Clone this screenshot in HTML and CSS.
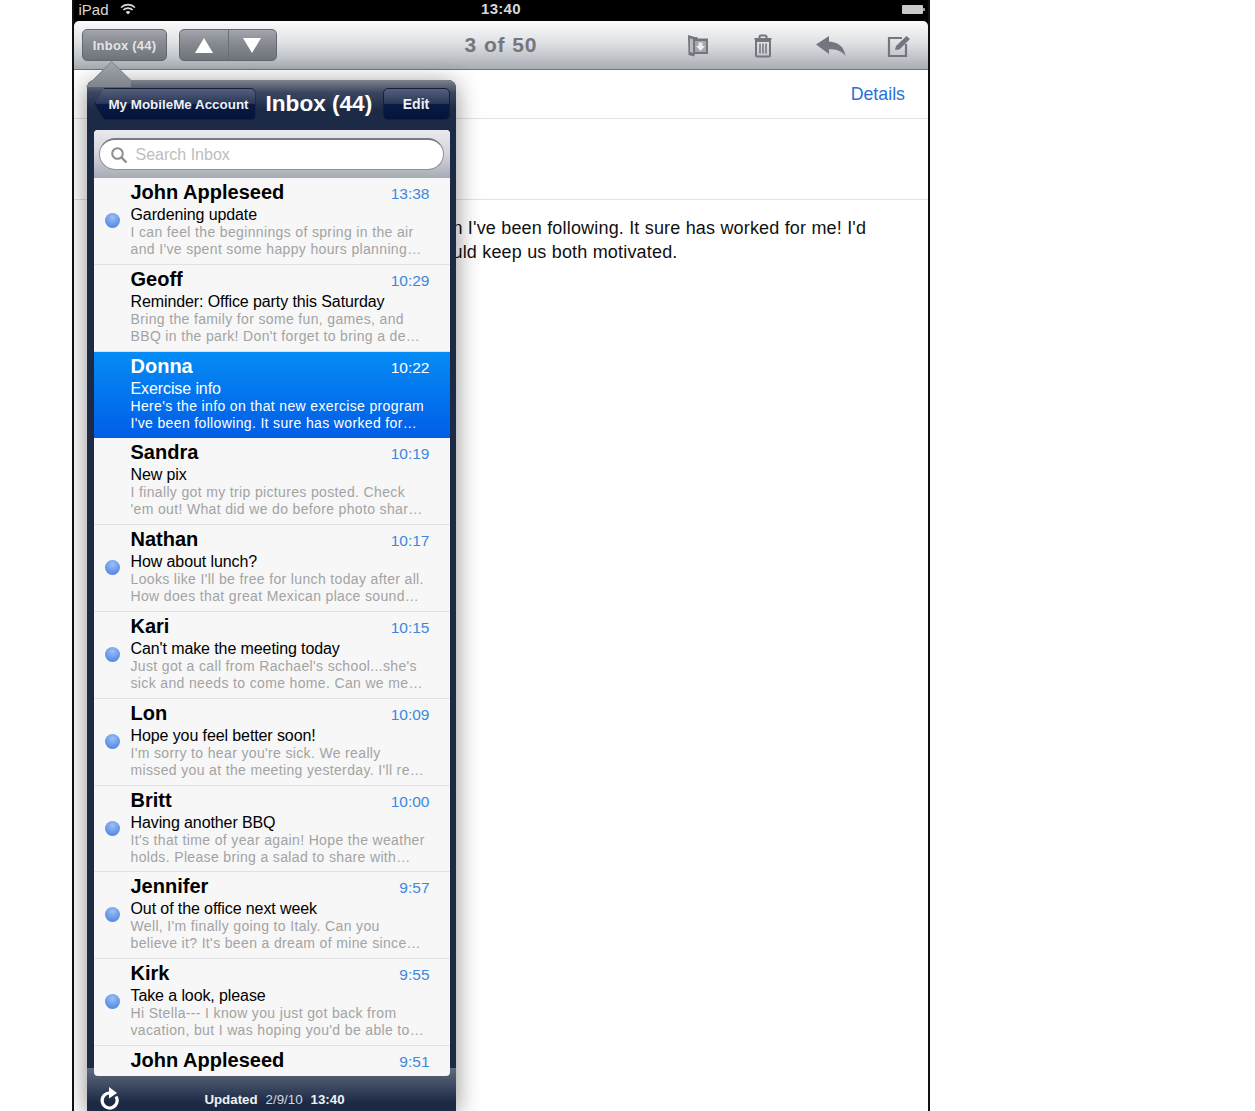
FILE: index.html
```html
<!DOCTYPE html>
<html lang="en">
  <head>
    <meta charset="UTF-8" />
    <title>Mail</title>
    <link rel="stylesheet" href="styles.css">
  </head>
  <body>
    <div class="ipad">
      <div class="status-bar">
        <div class="status-left">
          <span>iPad</span>
          <svg class="wifi" width="16" height="12" viewBox="0 0 16 12"><path d="M1 4.500a10 10 0 0 1 14 0M3.400 7a6.600 6.600 0 0 1 9.200 0" fill="none" stroke="#ddd" stroke-width="1.600"/><path d="M5.600 9.100a3.400 3.400 0 0 1 4.800 0L8 11.600z" fill="#ddd"/></svg>
        </div>
        <span class="clock">13:40</span>
        <div class="battery"></div>
      </div>

      <div class="toolbar">
        <div class="tool-left">
          <button class="tool-btn inbox-btn">Inbox (44)</button>
          <div class="tool-btn arrows">
            <span class="arrow-cell"><span class="tri-up"></span></span>
            <span class="arrow-cell"><span class="tri-down"></span></span>
          </div>
        </div>
        <div class="counter">3 of 50</div>
        <div class="tool-icons">
          <svg class="icon-folder" width="22" height="24" viewBox="0 0 22 24"><path d="M1 1l5 1.500c2 .6 3 .5 4 .5l1 1.500h10V20H8l-1 2.500L1.500 21z" fill="#73777d"/><path d="M3 4.300l3 .9V18.800l-3-.9z" fill="#b9bcc2"/><path d="M8 7h11v11H8z" fill="#a4a7ad"/><path d="M11.500 8.500h4v3.500H18l-4.500 5L9 12h2.500z" fill="#eceef0"/></svg>
          <svg class="icon-trash" width="20" height="24" viewBox="0 0 20 24"><path d="M6.500 4.500V3a1.500 1.500 0 0 1 1.500-1.500h4A1.500 1.500 0 0 1 13.500 3v1.500M1.500 5h17M3 7h14v14a1.500 1.500 0 0 1-1.500 1.500h-11A1.500 1.500 0 0 1 3 21z" fill="none" stroke="#73777d" stroke-width="2"/><path d="M7 9.500v10M10 9.500v10M13 9.500v10" stroke="#73777d" stroke-width="1.500"/></svg>
          <svg class="icon-reply" width="30" height="22" viewBox="0 0 30 22"><path d="M0 9.500L13 1v5.500c9 .5 15 5 16.500 14.500-3.500-5-9-6.800-16.500-6.800V19z" fill="#73777d"/></svg>
          <svg class="icon-compose" width="24" height="22" viewBox="0 0 24 22"><path d="M15 3H2v18h17V9" fill="none" stroke="#73777d" stroke-width="2.200"/><path d="M8 15l1-4L19.500 1 23 4 12.500 14.500z" fill="#73777d"/></svg>
        </div>
      </div>

      <div class="mail">
        <div class="mail-from"><a class="details">Details</a></div>
        <div class="mail-subject"></div>
        <div class="mail-body">
          <p>n I've been following. It sure has worked for me! I'd</p>
          <p>uld keep us both motivated.</p>
        </div>
      </div>

      <svg class="popover-arrow" width="46" height="26" viewBox="0 0 46 26">
        <defs>
          <linearGradient id="arrowFill" x1="0" y1="0" x2="0" y2="1">
            <stop offset="0" stop-color="#a3a6ad"/>
            <stop offset="1" stop-color="#7f838c"/>
          </linearGradient>
        </defs>
        <path d="M.5 25.500L25.500 .7 45 19.500V26H.5z" fill="url(#arrowFill)"/>
        <path d="M.5 25.500L25.500 .7 45 19.500" fill="none" stroke="#7b7f87"/>
      </svg>

      <div class="popover">
        <div class="pop-head">
          <button class="back-btn">My MobileMe Account</button>
          <h2 class="pop-title">Inbox (44)</h2>
          <button class="edit-btn">Edit</button>
        </div>

        <div class="pop-list">
          <div class="search-bar">
            <div class="search-field">
              <svg width="18" height="18" viewBox="0 0 18 18"><circle cx="7.500" cy="7.500" r="5.300" fill="none" stroke="#8d8d8d" stroke-width="2"/><path d="M11.500 11.500l5 5" stroke="#8d8d8d" stroke-width="2.400"/></svg>
              <span>Search Inbox</span>
            </div>
          </div>

          <div class="msg unread">
            <div class="msg-top"><b>John Appleseed</b><time>13:38</time></div>
            <div class="msg-subject">Gardening update</div>
            <div class="msg-preview">I can feel the beginnings of spring in the air<br>and I've spent some happy hours planning…</div>
          </div>
          <div class="msg">
            <div class="msg-top"><b>Geoff</b><time>10:29</time></div>
            <div class="msg-subject">Reminder: Office party this Saturday</div>
            <div class="msg-preview">Bring the family for some fun, games, and<br>BBQ in the park! Don't forget to bring a de…</div>
          </div>
          <div class="msg selected">
            <div class="msg-top"><b>Donna</b><time>10:22</time></div>
            <div class="msg-subject">Exercise info</div>
            <div class="msg-preview">Here's the info on that new exercise program<br>I've been following. It sure has worked for…</div>
          </div>
          <div class="msg">
            <div class="msg-top"><b>Sandra</b><time>10:19</time></div>
            <div class="msg-subject">New pix</div>
            <div class="msg-preview">I finally got my trip pictures posted. Check<br>'em out! What did we do before photo shar…</div>
          </div>
          <div class="msg unread">
            <div class="msg-top"><b>Nathan</b><time>10:17</time></div>
            <div class="msg-subject">How about lunch?</div>
            <div class="msg-preview">Looks like I'll be free for lunch today after all.<br>How does that great Mexican place sound…</div>
          </div>
          <div class="msg unread">
            <div class="msg-top"><b>Kari</b><time>10:15</time></div>
            <div class="msg-subject">Can't make the meeting today</div>
            <div class="msg-preview">Just got a call from Rachael's school...she's<br>sick and needs to come home. Can we me…</div>
          </div>
          <div class="msg unread">
            <div class="msg-top"><b>Lon</b><time>10:09</time></div>
            <div class="msg-subject">Hope you feel better soon!</div>
            <div class="msg-preview">I'm sorry to hear you're sick. We really<br>missed you at the meeting yesterday. I'll re…</div>
          </div>
          <div class="msg unread">
            <div class="msg-top"><b>Britt</b><time>10:00</time></div>
            <div class="msg-subject">Having another BBQ</div>
            <div class="msg-preview">It's that time of year again! Hope the weather<br>holds. Please bring a salad to share with…</div>
          </div>
          <div class="msg unread">
            <div class="msg-top"><b>Jennifer</b><time>9:57</time></div>
            <div class="msg-subject">Out of the office next week</div>
            <div class="msg-preview">Well, I'm finally going to Italy. Can you<br>believe it? It's been a dream of mine since…</div>
          </div>
          <div class="msg unread">
            <div class="msg-top"><b>Kirk</b><time>9:55</time></div>
            <div class="msg-subject">Take a look, please</div>
            <div class="msg-preview">Hi Stella--- I know you just got back from<br>vacation, but I was hoping you'd be able to…</div>
          </div>
          <div class="msg">
            <div class="msg-top"><b>John Appleseed</b><time>9:51</time></div>
          </div>
        </div>

        <div class="pop-foot">
          <svg class="refresh" width="22" height="24" viewBox="0 0 22 24"><path d="M17 9.500A7.500 7.500 0 1 1 10.500 6" fill="none" stroke="#fff" stroke-width="3.200"/><path d="M10 0l8 6-8 5.500z" fill="#fff"/></svg>
          <div class="updated"><b>Updated</b><span>2/9/10</span><b>13:40</b></div>
        </div>
      </div>
    </div>
  </body>
</html>
```

FILE: styles.css
```css
html,
body {
  margin: 0;
  height: 1111px;
  overflow: hidden;
  background: #fff;
}

body {
  font-family: 'Liberation Sans', Arial, sans-serif;
}

button {
  font-family: inherit;
  padding: 0;
  cursor: pointer;
}

.ipad {
  position: relative;
  width: 854px;
  height: 1111px;
  margin-left: 72px;
  border-left: 2.500px solid #111;
  border-right: 2px solid #111;
  overflow: hidden;
  background: #000;
}

.status-bar {
  height: 21px;
  display: flex;
  align-items: center;
  justify-content: space-between;
  padding: 0 3px 3px 4.500px;
  box-sizing: border-box;
  color: #d8d8d8;
  font-size: 15px;
  position: relative;
}

.status-left {
  display: flex;
  align-items: center;
  gap: 11px;
}

.clock {
  position: absolute;
  left: 407px;
  top: 0;
  font-weight: bold;
  letter-spacing: 0.300px;
}

.battery {
  position: relative;
  width: 21px;
  height: 9px;
  background: #c9c9c9;
  border-radius: 1px;
  margin-right: 2px;
}

.battery::after {
  content: '';
  position: absolute;
  right: -2px;
  top: 3px;
  width: 2px;
  height: 3px;
  background: #999;
}

.toolbar {
  height: 48px;
  display: grid;
  grid-template-columns: 1fr auto 1fr;
  align-items: center;
  padding: 0 17px 0 8px;
  border-radius: 5px 5px 0 0;
  border-bottom: 1px solid #72767c;
  background: linear-gradient(#fafafb, #dfe1e4 45%, #a9adb4);
}

.tool-left {
  display: flex;
  gap: 12px;
}

.tool-btn {
  height: 32px;
  box-sizing: border-box;
  border: 1px solid #62666d;
  border-radius: 5px;
  background: linear-gradient(#a2a5ab, #83878e 50%, #6f737b);
}

.inbox-btn {
  width: 85px;
  color: #e2e4e7;
  font-size: 13px;
  font-weight: bold;
  letter-spacing: 0.200px;
}

.arrows {
  width: 98px;
  display: flex;
}

.arrow-cell {
  flex: 1;
  display: flex;
  align-items: center;
  justify-content: center;
}

.arrow-cell + .arrow-cell {
  border-left: 1px solid #6b6f76;
}

.tri-up,
.tri-down {
  width: 0;
  height: 0;
  border-left: 9.500px solid transparent;
  border-right: 9.500px solid transparent;
}

.tri-up {
  border-bottom: 15px solid #fff;
}

.tri-down {
  border-top: 15px solid #fff;
}

.counter {
  color: #73777d;
  font-size: 21px;
  font-weight: bold;
  letter-spacing: 0.900px;
  margin-left: 9px;
}

.tool-icons {
  display: flex;
  align-items: center;
  justify-content: flex-end;
  gap: 43px;
  padding-top: 1px;
}

.icon-folder {
  margin-right: 1px;
}

.icon-reply {
  margin-right: -2px;
}

.mail {
  background: #fff;
  height: 1041px;
}

.mail-from {
  height: 48px;
  display: flex;
  align-items: center;
  justify-content: flex-end;
  padding-right: 23px;
  border-bottom: 1px solid #e2e2e2;
}

.details {
  color: #2a70d8;
  font-size: 17.800px;
}

.mail-subject {
  height: 80px;
  border-bottom: 1px solid #e2e2e2;
}

.mail-body {
  padding: 17px 0 0 378.500px;
  color: #111;
  font-size: 18px;
  line-height: 23.500px;
  letter-spacing: 0.180px;
}

.mail-body p {
  margin: 0;
  white-space: nowrap;
}

.popover-arrow {
  position: absolute;
  left: 12px;
  top: 61px;
  z-index: 2;
}

.popover {
  position: absolute;
  left: 12.500px;
  top: 80px;
  width: 369px;
  height: 1031px;
  border-radius: 8px 8px 0 0;
  background: #1c2a45;
  box-shadow: 0 4px 24px rgba(0, 0, 0, 0.45);
  z-index: 1;
}

.pop-head {
  height: 50px;
  display: flex;
  align-items: flex-start;
  gap: 10px;
  padding: 8px 6px 0 8px;
  box-sizing: border-box;
  border-radius: 8px 8px 0 0;
  background: linear-gradient(#7f838c, #3c4660 25%, #1c2a45 60%);
  position: relative;
  z-index: 3;
}

.back-btn,
.edit-btn {
  height: 32px;
  color: #eef0f4;
  font-weight: bold;
  border: 1px solid #14203a;
  border-radius: 5px;
  background: linear-gradient(#55607a, #2a3757 48%, #081a45 52%, #04133a);
}

.back-btn {
  width: 161px;
  flex: none;
  padding-left: 7px;
  font-size: 13.400px;
  clip-path: polygon(10px 0, 100% 0, 100% 100%, 10px 100%, 0 50%);
}

.edit-btn {
  width: 67px;
  flex: none;
  font-size: 14px;
}

.pop-title {
  flex: 1;
  margin: 3px 0 0;
  color: #fff;
  font-size: 22.600px;
  font-weight: bold;
  white-space: nowrap;
}

.pop-list {
  position: relative;
  z-index: 1;
  margin: 0 6px 0 7px;
  height: 946px;
  overflow: hidden;
  border-radius: 4px;
  background: #f7f7f7;
}

.search-bar {
  height: 48px;
  display: flex;
  align-items: center;
  padding: 0 6px 0 5px;
  box-sizing: border-box;
  background: linear-gradient(#e9eaed, #d3d5da 50%, #a6abb5);
}

.search-field {
  flex: 1;
  height: 32px;
  display: flex;
  align-items: center;
  gap: 8px;
  padding-left: 10px;
  box-sizing: border-box;
  border: 1px solid #8f9299;
  border-top: 2px solid #777b82;
  border-radius: 16px;
  background: #fff;
  color: #bdbdbd;
  font-size: 16px;
}

.msg {
  position: relative;
  height: 86.800px;
  box-sizing: border-box;
  padding: 2px 20px 0 37px;
  border-bottom: 1px solid #e1e1e1;
  color: #000;
}

.msg.unread::before {
  content: '';
  position: absolute;
  left: 11px;
  top: 35px;
  width: 15px;
  height: 15px;
  border-radius: 50%;
  background: radial-gradient(circle at 50% 30%, #9cc0f7, #3f78dc);
}

.msg-top {
  display: flex;
  justify-content: space-between;
  align-items: center;
  height: 25px;
}

.msg-top b {
  font-size: 20px;
}

.msg-top time {
  color: #3d88de;
  font-size: 15.500px;
  padding-top: 3px;
}

.msg-subject {
  height: 19px;
  font-size: 16px;
  line-height: 19px;
  letter-spacing: -0.100px;
}

.msg-preview {
  color: #a3a3a3;
  font-size: 14px;
  line-height: 17px;
  letter-spacing: 0.350px;
  white-space: nowrap;
}

.msg.selected {
  color: #fff;
  border-bottom: none;
  background: linear-gradient(#058cf5, #015de6);
}

.msg.selected time,
.msg.selected .msg-preview {
  color: #fff;
}

.pop-foot {
  position: relative;
  height: 43px;
  margin-top: -8px;
  background: linear-gradient(#5f6a7c, #3b475f 45%, #1c2a45 80%);
}

.refresh {
  display: block;
  margin-left: 12px;
  padding-top: 19px;
}

.updated {
  position: absolute;
  left: 0;
  right: 0;
  top: 24px;
  display: flex;
  justify-content: center;
  gap: 8px;
  padding-left: 7px;
  color: #f0f1f3;
  font-size: 13.300px;
  line-height: 16px;
}

.updated span {
  color: #d5d8de;
}
```
